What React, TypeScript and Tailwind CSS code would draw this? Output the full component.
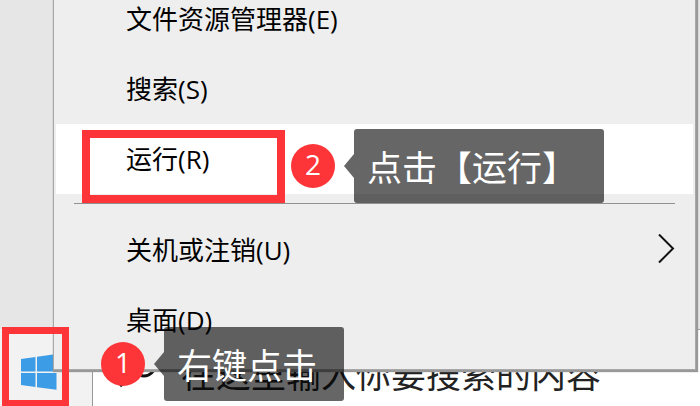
import React from 'react';
import clsx from 'clsx';

interface MenuItem {
  id: string;
  label: string;
  active?: boolean;
  hasSubmenu?: boolean;
}

const topItems: MenuItem[] = [
  { id: 'explorer', label: '文件资源管理器(E)' },
  { id: 'search', label: '搜索(S)' },
  { id: 'run', label: '运行(R)', active: true }
];

const bottomItems: MenuItem[] = [
  { id: 'power', label: '关机或注销(U)', hasSubmenu: true },
  { id: 'desktop', label: '桌面(D)' }
];

const MenuRow: React.FC<{ item: MenuItem }> = ({ item }) => (
  <li>
    <button
      type="button"
      className={clsx(
        'flex h-[70px] w-full items-center justify-between pr-[18px] pl-[70px] text-left text-[26px] leading-8 text-black',
        item.active && 'bg-white'
      )}
    >
      {item.label}
      {item.hasSubmenu && (
        <svg className="h-8 w-[18px]" viewBox="0 0 18 32" fill="none" stroke="#111" strokeWidth="2">
          <path d="M2 0.5 L16 14.5 L2 28.5" />
        </svg>
      )}
    </button>
  </li>
);

interface StepProps {
  step: number;
  text: string;
  boxClass: string;
}

// Numbered badge followed by a dark callout pointing at it
const Step: React.FC<StepProps> = ({ step, text, boxClass }) => (
  <div className="flex items-center">
    <span className="flex size-11 items-center justify-center rounded-full bg-[#fd3538] pb-1 text-[28px] leading-8 text-white">
      {step}
    </span>
    <svg className="ml-[9px] h-6 w-[10px]" viewBox="0 0 10 24">
      <path d="M10 0 L0 12 L10 24 Z" fill="#000" fillOpacity="0.6" />
    </svg>
    <p
      className={clsx(
        'flex h-[74px] items-center rounded-[3px] bg-black/60 pt-1 pl-[13px] text-[35px] leading-10 whitespace-nowrap text-white',
        boxClass
      )}
    >
      {text}
    </p>
  </div>
);

const WindowsLogo = () => (
  <svg className="h-9 w-9" viewBox="0 0 36 36" fill="#3c9de6">
    <path d="M0 5 L14.5 3 V17.5 H0 Z" />
    <path d="M16 2.8 L35.5 0 V17.5 H16 Z" />
    <path d="M0 19 H14.5 V33 L0 31 Z" />
    <path d="M16 19 H35.5 V35.8 L16 33.2 Z" />
  </svg>
);

const App: React.FC = () => {
  return (
    <div className="relative flex h-screen flex-col overflow-hidden bg-[#e6e6e6] font-['Open_Sans','Noto_Sans_CJK_SC',sans-serif]">
      <main className="flex-1" />

      {/* Taskbar */}
      <footer className="flex h-[77px] bg-[#f2f2f2]">
        <button type="button" aria-label="Start" className="flex w-[92px] items-center pt-2 pl-[21px]">
          <WindowsLogo />
        </button>
        <label className="flex flex-1 items-center border-t border-l border-[#999] bg-white pt-3 pl-6">
          <svg className="mb-2 h-10 w-10" viewBox="0 0 40 40" fill="none" stroke="#111" strokeWidth="3">
            <circle cx="27" cy="15" r="11" />
            <path d="M19 23 L3 36" />
          </svg>
          <input
            type="text"
            aria-label="Search"
            placeholder="在这里输入你要搜索的内容"
            className="ml-6 h-12 min-w-0 flex-1 bg-transparent text-[35px] leading-10 outline-none placeholder:text-[#222]"
          />
        </label>
      </footer>

      {/* Context menu */}
      <nav className="absolute top-0 right-1 bottom-9 left-[53px] flex flex-col justify-end border-r border-b border-l border-[#a8a8a8] bg-[#eeeeee] px-[2px] pb-[14px] shadow-[1px_1px_1px_1px_#999]">
        <ul>
          {topItems.map((item) => (
            <MenuRow key={item.id} item={item} />
          ))}
        </ul>
        <hr className="mx-[18px] mt-[9px] mb-[11px] border-t border-[#919191]" />
        <ul>
          {bottomItems.map((item) => (
            <MenuRow key={item.id} item={item} />
          ))}
        </ul>
      </nav>

      {/* Step 2: run entry */}
      <div className="absolute bottom-[203px] left-[82px] flex items-end gap-[6px]">
        <div className="h-[73px] w-[203px] border-8 border-[#fd3538]" />
        <Step step={2} text="点击【运行】" boxClass="w-[250px]" />
      </div>

      {/* Step 1: start button */}
      <div className="absolute bottom-[-1px] left-[2px] flex items-start gap-8">
        <div className="h-20 w-[67px] border-[7px] border-[#fd3538]" />
        <Step step={1} text="右键点击" boxClass="w-[180px]" />
      </div>
    </div>
  );
};

export default App;
